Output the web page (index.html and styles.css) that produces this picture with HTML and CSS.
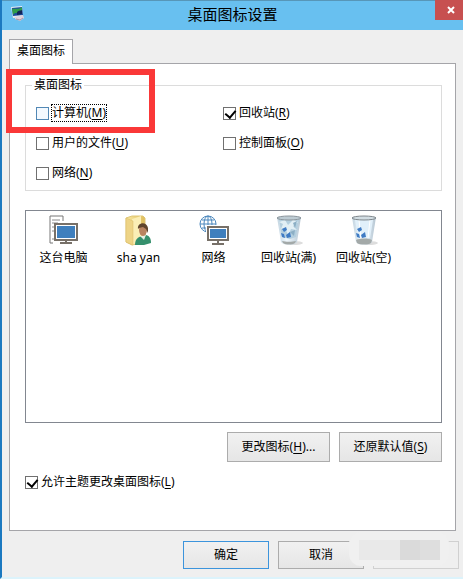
FILE: index.html
```html
<!DOCTYPE html>
<html lang="zh-CN">

<head>
    <meta charset="UTF-8">
    <meta name="viewport" content="width=device-width, initial-scale=1.0">
    <title>桌面图标设置</title>
    <link rel="stylesheet" href="styles.css">
</head>

<body>
    <div class="window">
        <header class="titlebar">
            <svg class="app-icon" viewBox="0 0 16 18">
                <path d="M1 2l11-1 1 11-10 1z" fill="#e4e9ef" />
                <path d="M2 3l10-1 1 8-10 1z" fill="#1d4a9c" />
                <path d="M2 4c4-1 6 1 10-2v5c-4 3-6-1-9 3z" fill="#2f9d49" />
                <path d="M7 7c2-2 4-1 5-2v4l-5 1z" fill="#122458" />
                <path d="M5 12l8-2 1 3-4 3-5-2z" fill="#ddd3dc" />
                <path d="M6 14l4 1 3-2" fill="none" stroke="#a893a4" />
            </svg>
            <h1>桌面图标设置</h1>
            <button class="close" type="button" aria-label="关闭">
                <svg viewBox="0 0 8 8"><path d="M1 1l6 6M7 1l-6 6" stroke="#fff" stroke-width="2" /></svg>
            </button>
        </header>

        <main>
            <button class="tab" type="button">桌面图标</button>
            <div class="panel">
                <fieldset>
                    <legend>桌面图标</legend>
                    <div class="checks">
                        <label class="check active"><input type="checkbox"><span>计算机(<u>M</u>)</span></label>
                        <label class="check"><input type="checkbox" checked><span>回收站(<u>R</u>)</span></label>
                        <label class="check"><input type="checkbox"><span>用户的文件(<u>U</u>)</span></label>
                        <label class="check"><input type="checkbox"><span>控制面板(<u>O</u>)</span></label>
                        <label class="check"><input type="checkbox"><span>网络(<u>N</u>)</span></label>
                    </div>
                    <div class="highlight"></div>
                </fieldset>

                <ul class="icons">
                    <li>
                        <svg viewBox="0 0 32 32">
                            <path d="M5 28H2V1h13v5" fill="#fff" stroke="#777" />
                            <path d="M4 5h8M4 8h6M4 12h3M4 16h3M4 24h2" stroke="#8a8a8a" />
                            <path d="M7 9h22v16H7z" fill="#fff" stroke="#777068" stroke-width="2" />
                            <path d="M9 11h18v12H9z" fill="#3f7fbd" />
                            <path d="M18 25v3M12 28h12" stroke="#777068" stroke-width="2" />
                        </svg>
                        <span>这台电脑</span>
                    </li>
                    <li>
                        <svg viewBox="0 0 32 32">
                            <defs>
                                <linearGradient id="folder" x2="1">
                                    <stop offset="0" stop-color="#f8e9a2" />
                                    <stop offset="1" stop-color="#dfbd5c" />
                                </linearGradient>
                            </defs>
                            <path d="M3 3l6-2h11l2 2v24l-13 3-6-3z" fill="url(#folder)" stroke="#dfc676" />
                            <path d="M9 4l9-3v25l-9 4z" fill="#fbeeb5" />
                            <path d="M3 3l7 3v24l-7-3z" fill="#eed486" stroke="#d8bb67" stroke-width=".5" />
                            <path d="M12 30c0-6 3-8 7-9l4-1c4 1 5 4 5 8l-7 2z" fill="#35906d" />
                            <path d="M17 21l4 4 2-5z" fill="#e5eee2" />
                            <ellipse cx="20" cy="15" rx="4" ry="6" fill="#b98461" />
                            <path d="M15 14c-1-7 9-8 10-1v5l-2-4-3-2-4 1z" fill="#60452d" />
                        </svg>
                        <span>sha yan</span>
                    </li>
                    <li>
                        <svg viewBox="0 0 32 32">
                            <g fill="none" stroke="#4b87bd">
                                <circle cx="10" cy="9" r="8" />
                                <ellipse cx="10" cy="9" rx="4" ry="8" />
                                <path d="M10 1v16M2 9h16M4 5h12M4 13h12" />
                            </g>
                            <path d="M10 12h20v13H10z" fill="#fff" stroke="#fff" stroke-width="4" />
                            <path d="M10 12h20v13H10z" fill="#fff" stroke="#777068" stroke-width="2" />
                            <path d="M12 14h16v9H12z" fill="#3f7fbd" />
                            <path d="M20 25v4M14 29h12" stroke="#777068" stroke-width="2" />
                        </svg>
                        <span>网络</span>
                    </li>
                    <li>
                        <svg viewBox="0 0 32 32">
                            <defs>
                                <linearGradient id="bin" x2="1">
                                    <stop offset="0" stop-color="#c2d4e0" />
                                    <stop offset=".4" stop-color="#f0f8fd" />
                                    <stop offset="1" stop-color="#b5c6d3" />
                                </linearGradient>
                            </defs>
                            <ellipse cx="20" cy="28" rx="10" ry="2" fill="#ddd" />
                            <path d="M4 2l4 25c2 4 14 4 16 0l4-25z" fill="url(#bin)" />
                            <path d="M6 4l5 1 4-2 5 3 6-2-3 18-6 2-8-2z" fill="#b4cfdf" />
                            <path d="M6 7l6-2 3 5 5-5 5 2-5 4 4 4-6-1-3 6-3-7-4 1 2-5z" fill="#e2eff5" />
                            <path d="M20 8l4-2-2 7zM17 17l5-2-1 6z" fill="#8cafc5" />
                            <ellipse cx="16" cy="3" rx="12" ry="2" fill="#bdcbd3" stroke="#8c969d" />
                            <path d="M9 14l4-2 1 3-3 2zM8 18l3 1 1 4-3-1zM13 20l4-3 1 5-4 1z" fill="#3f7bc4" />
                            <path d="M9 26c4 1 10 1 14 0l-1 2c-3 2-9 2-12 0z" fill="#a3a9a8" />
                        </svg>
                        <span>回收站(满)</span>
                    </li>
                    <li>
                        <svg viewBox="0 0 32 32">
                            <ellipse cx="20" cy="28" rx="10" ry="2" fill="#ddd" />
                            <path d="M4 2l4 25c2 4 14 4 16 0l4-25z" fill="url(#bin)" />
                            <path d="M7 5h18l-3 18H10z" fill="#e1f0fa" />
                            <path d="M11 5l2 19M22 5l-2 18" stroke="#fff" />
                            <ellipse cx="16" cy="3" rx="12" ry="2" fill="#d2dde3" stroke="#7f878c" />
                            <path d="M9 14l4-2 1 3-3 2zM8 18l3 1 1 4-3-1zM13 20l4-3 1 5-4 1z" fill="#3f7bc4" />
                            <path d="M8 25c4-2 12-2 16 0l-1 3c-3 2-11 2-14 0z" fill="#a3a9a8" />
                        </svg>
                        <span>回收站(空)</span>
                    </li>
                </ul>

                <div class="actions">
                    <button type="button">更改图标(<u>H</u>)...</button>
                    <button type="button">还原默认值(<u>S</u>)</button>
                </div>
                <label class="check theme"><input type="checkbox" checked><span>允许主题更改桌面图标(<u>L</u>)</span></label>
            </div>
        </main>

        <footer>
            <button class="ok" type="button">确定</button>
            <button type="button">取消</button>
            <button class="apply" type="button" aria-label="应用" disabled></button>
            <div class="smudge"><i></i><i></i><i></i><i></i></div>
        </footer>
    </div>
</body>

</html>
```
FILE: styles.css
```css
* {
    margin: 0;
    padding: 0;
    box-sizing: border-box;
}

body {
    font-family: "Noto Sans", "Noto Sans CJK SC", sans-serif;
    font-size: 12px;
    line-height: 16px;
    color: #000;
    background: #efefef;
}

button {
    font: inherit;
    color: inherit;
}

u {
    text-underline-offset: 2px;
}

.window {
    min-height: 100vh;
    display: flex;
    flex-direction: column;
    border-left: 2px solid #1b79c0;
    border-bottom: 2px solid #dcf3fb;
}

.titlebar {
    position: relative;
    height: 30px;
    display: flex;
    align-items: center;
    justify-content: center;
    padding-bottom: 3px;
    background: #68c0f0;
    border-top: 1px solid #5796b8;
}

.titlebar h1 {
    font-size: 15px;
    line-height: 20px;
    font-weight: normal;
}

.app-icon {
    position: absolute;
    left: 8px;
    top: 4px;
    width: 16px;
    height: 18px;
}

.close {
    position: absolute;
    right: 0;
    top: -1px;
    width: 28px;
    height: 20px;
    padding-left: 4px;
    border: 0;
    background: #c75050;
}

.close svg {
    width: 8px;
    height: 8px;
}

main {
    flex: 1;
    display: flex;
    flex-direction: column;
    align-items: flex-start;
    padding: 9px 7px 0;
}

.tab {
    position: relative;
    width: 64px;
    height: 25px;
    margin-bottom: -1px;
    padding-bottom: 2px;
    border: 1px solid #a5a5a9;
    border-bottom: 0;
    background: #fff;
}

.panel {
    flex: 1;
    width: 100%;
    padding: 13px 13px 0 15px;
    border: 1px solid #a5a5a9;
    background: #fff;
}

fieldset {
    position: relative;
    height: 114px;
    min-width: 0;
    border: 1px solid #dcdcdc;
}

legend {
    margin-left: 6px;
    padding: 0 2px;
}

.checks {
    display: grid;
    grid-template-columns: 187px 1fr;
    grid-auto-rows: 30px;
    padding: 5px 10px;
}

.check {
    display: flex;
    align-items: center;
    gap: 3px;
}

.check input {
    appearance: none;
    width: 13px;
    height: 13px;
    border: 1px solid #707070;
    background: #fff;
}

.check input:checked::before {
    content: "";
    display: block;
    width: 5px;
    height: 8px;
    margin-left: 3px;
    border: solid #000;
    border-width: 0 2px 2px 0;
    transform: rotate(40deg);
}

.active input {
    border-color: #5288b5;
    background: #f3f9ff;
}

.active span {
    outline: 1px dotted #000;
}

.highlight {
    position: absolute;
    left: -20px;
    top: -24px;
    width: 149px;
    height: 64px;
    border: 6px solid #fa3838;
    pointer-events: none;
}

.icons {
    display: flex;
    height: 213px;
    margin-top: 19px;
    padding-top: 4px;
    border: 1px solid #828790;
    list-style: none;
}

.icons li {
    width: 75px;
    display: flex;
    flex-direction: column;
    align-items: center;
    gap: 3px;
}

.icons svg {
    width: 32px;
    height: 32px;
}

.actions {
    display: flex;
    justify-content: flex-end;
    gap: 9px;
    margin-top: 9px;
}

.actions button,
footer button {
    border: 1px solid #acacac;
    background: linear-gradient(#f1f1f1, #e6e6e6);
}

.actions button {
    width: 103px;
    height: 30px;
}

.theme {
    margin-top: 12px;
}

footer {
    position: relative;
    display: flex;
    justify-content: flex-end;
    gap: 9px;
    padding: 10px 4px 8px;
}

footer button {
    width: 86px;
    height: 28px;
}

footer .ok {
    border-color: #3c94dc;
}

footer .apply {
    border-color: #d0d0d0;
    background: #efefef;
}

/* faded patch over the last two buttons */
.smudge {
    position: absolute;
    right: 14px;
    top: 1px;
    width: 100px;
    height: 34px;
    display: flex;
    padding: 8px 9px 0 10px;
    border-radius: 12px;
    background: #f0f0f0;
}

.smudge i {
    flex: 1;
    height: 20px;
    background: #e9e9e9;
}

.smudge i:nth-child(3) {
    background: #dadada;
}

.smudge i:nth-child(4) {
    background: #dedede;
}
```
